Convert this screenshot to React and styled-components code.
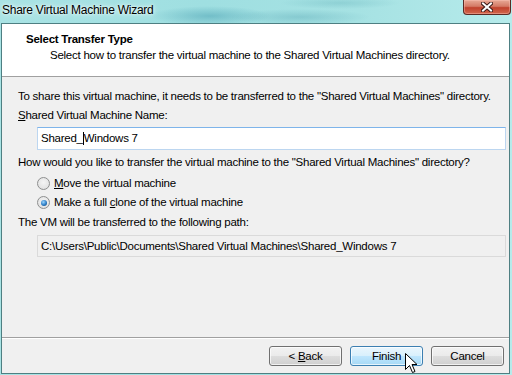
import React from 'react';
import styled, { createGlobalStyle } from 'styled-components';

const GlobalStyle = createGlobalStyle`
  html, body {
    margin: 0;
    padding: 0;
  }
  body {
    font-family: "Liberation Sans", Arial, sans-serif;
    font-size: 11.5px;
    letter-spacing: -0.25px;
    color: #000;
  }
`;

const Screen = styled.div`
  position: relative;
  width: 512px;
  height: 375px;
  overflow: hidden;
  display: flex;
  flex-direction: column;
  background:
    radial-gradient(ellipse 60px 10px at 210px 16px, rgba(60, 150, 170, 0.45), transparent),
    radial-gradient(ellipse 70px 8px at 300px 17px, rgba(80, 160, 175, 0.35), transparent),
    radial-gradient(ellipse 60px 6px at 340px 3px, rgba(90, 170, 180, 0.3), transparent),
    linear-gradient(90deg, #a9e3e4 0%, #9fdfe1 40%, #a6e2e3 70%, #b6ebeb 100%);
`;

const TitleBar = styled.div`
  height: 23px;
  display: flex;
  align-items: flex-start;
  justify-content: space-between;
`;

const Title = styled.div`
  padding: 3px 0 0 2px;
  line-height: 15px;
  font-size: 12px;
  text-shadow: 0 0 6px rgba(255, 255, 255, 0.9), 0 0 3px rgba(255, 255, 255, 0.9);
`;

const CloseButton = styled.div`
  width: 46px;
  height: 14px;
  margin-right: 1px;
  border: 1px solid #5a2a24;
  border-top: none;
  border-radius: 0 0 4px 4px;
  background: linear-gradient(180deg, #e8a996 0%, #d47a66 45%, #c0412c 55%, #d2684e 100%);
  box-shadow: inset 0 0 0 1px rgba(255, 200, 190, 0.4);
  display: flex;
  align-items: center;
  justify-content: center;
`;

const Client = styled.div`
  flex: 1;
  margin: 0 2px 1px 1px;
  border: 1px solid #4e7f82;
  background: #f0f0f0;
  display: flex;
  flex-direction: column;
`;

const Header = styled.div`
  height: 53px;
  border-bottom: 1px solid #a0a0a0;
  background: #fff;
  padding: 8px 0 0 24px;
  box-sizing: border-box;
`;

const HeaderTitle = styled.div`
  font-weight: bold;
  line-height: 15px;
`;

const HeaderText = styled.div`
  line-height: 15px;
  margin: 1px 0 0 24px;
`;

const Body = styled.div`
  height: 260px;
  padding: 12px 3px 0 16px;
  box-sizing: border-box;
`;

const Line = styled.div`
  line-height: 15px;
  margin-top: ${p => p.$gap || 0}px;
  white-space: nowrap;
`;

const Field = styled.div`
  margin: ${p => p.$gap}px 0 0 19px;
  height: ${p => p.$h}px;
  box-sizing: border-box;
  border: 1px solid;
  border-color: ${p => (p.$readOnly ? '#dadada' : '#7eb4ea #bcd6f0 #bcd6f0 #bcd6f0')};
  background: ${p => (p.$readOnly ? '#f0f0f0' : '#fff')};
  padding: 0 3px;
  display: flex;
  align-items: center;
  line-height: 15px;
  white-space: pre;
`;

const Caret = styled.span`
  display: inline-block;
  width: 1px;
  height: 13px;
  background: #000;
`;

const RadioRow = styled.label`
  display: flex;
  align-items: center;
  gap: 4px;
  margin: ${p => p.$gap}px 0 0 19px;
  line-height: 15px;
`;

const RadioDot = styled.span`
  width: 11px;
  height: 11px;
  border-radius: 50%;
  border: 1px solid #8e8f8f;
  background: radial-gradient(circle at 50% 40%, #f4f4f4 0%, #dcdcdc 100%);
  display: flex;
  align-items: center;
  justify-content: center;
  &::after {
    content: '';
    display: ${p => (p.$checked ? 'block' : 'none')};
    width: 6px;
    height: 6px;
    border-radius: 50%;
    background: radial-gradient(circle at 40% 35%, #9ad6ff 0%, #2b7bc4 55%, #11406e 100%);
  }
`;

const Footer = styled.div`
  flex: 1;
  border-top: 1px solid #a0a0a0;
  box-shadow: inset 0 1px 0 #fff;
  display: flex;
  justify-content: flex-end;
  align-items: flex-start;
  gap: 8px;
  padding: 8px 5px 0 0;
`;

const Button = styled.div`
  width: 73px;
  height: 20px;
  box-sizing: border-box;
  border: 1px solid ${p => (p.$hover ? '#3c7fb1' : '#707070')};
  border-radius: 3px;
  background: ${p =>
    p.$hover
      ? 'linear-gradient(180deg, #eaf6fd 0%, #d9f0fc 48%, #bee6fd 52%, #a7d9f5 100%)'
      : 'linear-gradient(180deg, #f2f2f2 0%, #ebebeb 48%, #dddddd 52%, #cfcfcf 100%)'};
  box-shadow: inset 0 0 0 1px rgba(255, 255, 255, 0.7);
  display: flex;
  align-items: center;
  justify-content: center;
  line-height: 15px;
  white-space: pre;
`;

const Key = styled.span`
  text-decoration: underline;
  text-underline-offset: 1px;
`;

const Cursor = styled.svg`
  position: absolute;
  left: 405px;
  top: 353px;
`;

const App = () => {
  return (
    <Screen>
      <GlobalStyle />
      <TitleBar>
        <Title>Share Virtual Machine Wizard</Title>
        <CloseButton>
          <svg width="12" height="10" viewBox="0 0 12 10">
            <path d="M2 1.5 L10 8.5 M10 1.5 L2 8.5" stroke="#3a1a18" strokeWidth="4" strokeLinecap="square" />
            <path d="M2 1.5 L10 8.5 M10 1.5 L2 8.5" stroke="#fff" strokeWidth="2" strokeLinecap="square" />
          </svg>
        </CloseButton>
      </TitleBar>
      <Client>
        <Header>
          <HeaderTitle>Select Transfer Type</HeaderTitle>
          <HeaderText>Select how to transfer the virtual machine to the Shared Virtual Machines directory.</HeaderText>
        </Header>
        <Body>
          <Line>To share this virtual machine, it needs to be transferred to the "Shared Virtual Machines" directory.</Line>
          <Line $gap={4}><Key>S</Key>hared Virtual Machine Name:</Line>
          <Field $gap={4} $h={23}><span>Shared_</span><Caret /><span>Windows 7</span></Field>
          <Line $gap={5}>How would you like to transfer the virtual machine to the "Shared Virtual Machines" directory?</Line>
          <RadioRow $gap={6}>
            <RadioDot />
            <span><Key>M</Key>ove the virtual machine</span>
          </RadioRow>
          <RadioRow $gap={4}>
            <RadioDot $checked />
            <span>Make a full <Key>c</Key>lone of the virtual machine</span>
          </RadioRow>
          <Line $gap={5}>The VM will be transferred to the following path:</Line>
          <Field $gap={5} $h={22} $readOnly>C:\Users\Public\Documents\Shared Virtual Machines\Shared_Windows 7</Field>
        </Body>
        <Footer>
          <Button><span>&lt; <Key>B</Key>ack</span></Button>
          <Button $hover>Finish</Button>
          <Button>Cancel</Button>
        </Footer>
      </Client>
      <Cursor width="13" height="21" viewBox="0 0 13 21">
        <path d="M0.5 0.5 L0.5 16.5 L4.5 12.5 L7.5 19.5 L10 18.5 L7 11.5 L12 11.5 Z" fill="#fff" stroke="#000" strokeWidth="1" strokeLinejoin="miter" />
      </Cursor>
    </Screen>
  );
};

export default App;
